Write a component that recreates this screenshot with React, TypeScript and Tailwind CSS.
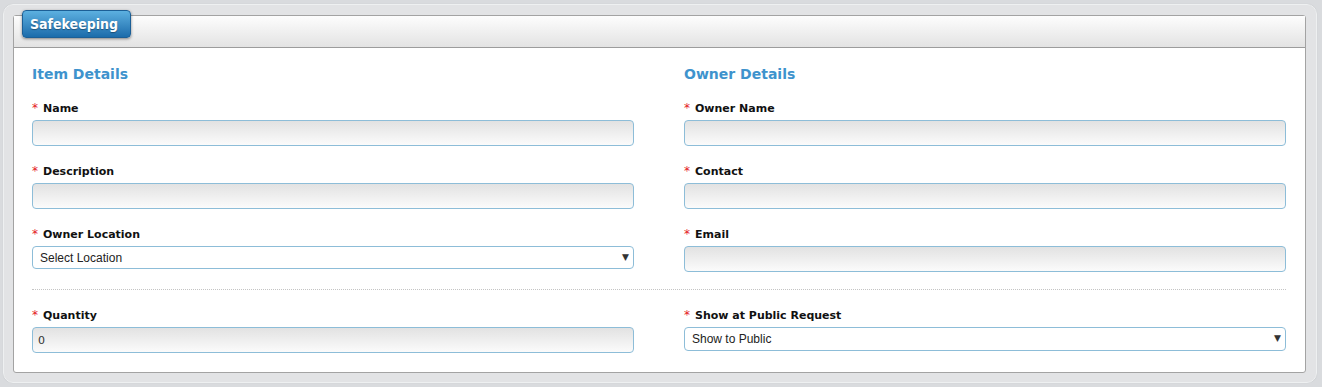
import { ReactNode } from 'react'

const labelFont = { fontFamily: '"DejaVu Sans", Verdana, sans-serif' }

function Label({ children }: { children: ReactNode }) {
  return (
    <label
      className="flex items-center h-[14px] pt-[2px] text-[11px] font-bold text-[#111] leading-none"
      style={labelFont}
    >
      <span className="text-[#e4201c] font-normal mr-[5px] text-[12px]">*</span>
      {children}
    </label>
  )
}

function TextField({ value = '' }: { value?: string }) {
  return (
    <input
      type="text"
      defaultValue={value}
      className="mt-[6px] block h-[26px] w-full rounded-[4px] border border-[#8dbdd8] bg-gradient-to-b from-[#e2e2e2] to-[#fbfbfb] px-[5px] text-[11px] text-[#333] outline-none font-['DejaVu_Sans',sans-serif]"
    />
  )
}

function SelectField({ value, height }: { value: string; height: string }) {
  return (
    <div className={`relative mt-[6px] w-full ${height}`}>
      <select
        defaultValue={value}
        className="block h-full w-full appearance-none rounded-[4px] border border-[#8dbdd8] bg-white pl-[7px] text-[12px] text-[#222] outline-none font-['Liberation_Sans',Arial,sans-serif]"
      >
        <option>{value}</option>
      </select>
      <span className="pointer-events-none absolute right-[5px] top-1/2 -translate-y-1/2 text-[9px] text-[#333] font-['DejaVu_Sans',sans-serif]">
        ▼
      </span>
    </div>
  )
}

function Field({ label, children }: { label: string; children: ReactNode }) {
  return (
    <div className="flex flex-col mb-[17px]">
      <Label>{label}</Label>
      {children}
    </div>
  )
}

export default function App() {
  return (
    <div className="h-[387px] w-full bg-[#d9dbde] pt-[4px] pl-[3px] pr-[5px]">
      <div className="h-[379px] rounded-[10px] border border-[#eef0f1] bg-[#e2e3e5] pt-[10px] pl-[9px] pr-[10px] shadow-[0_0_1px_rgba(0,0,0,0.15)]">
        <div className="relative h-[358px] rounded-[3px] border border-[#a3a3a3] bg-white">
          <div className="h-[32px] border-b border-[#9c9c9c] bg-gradient-to-b from-[#fdfdfd] to-[#e3e3e3]" />
          <div
            className="absolute left-[8px] top-[-6px] flex h-[28px] w-[109px] items-center rounded-[4px] border border-[#1c5f96] bg-gradient-to-b from-[#5cb0e0] to-[#1b6cab] pl-[7px] text-[14px] font-bold text-white shadow-[0_1px_3px_rgba(0,0,0,0.45)]"
            style={{ fontFamily: '"DejaVu Sans Condensed", "DejaVu Sans", sans-serif', textShadow: '0 1px 1px rgba(0,0,0,0.35)' }}
          >
            Safekeeping
          </div>

          <div className="pl-[18px] pr-[19px] pt-[17px]">
            <div className="grid grid-cols-2 gap-x-[50px]">
              <div className="flex flex-col">
                <h2
                  className="mb-[17px] h-[18px] text-[14px] font-bold leading-[18px] text-[#3e93cd]"
                  style={labelFont}
                >
                  Item Details
                </h2>
                <Field label="Name">
                  <TextField />
                </Field>
                <Field label="Description">
                  <TextField />
                </Field>
                <Field label="Owner Location">
                  <SelectField value="Select Location" height="h-[23px]" />
                </Field>
              </div>
              <div className="flex flex-col">
                <h2
                  className="mb-[17px] h-[18px] text-[14px] font-bold leading-[18px] text-[#3e93cd]"
                  style={labelFont}
                >
                  Owner Details
                </h2>
                <Field label="Owner Name">
                  <TextField />
                </Field>
                <Field label="Contact">
                  <TextField />
                </Field>
                <Field label="Email">
                  <TextField />
                </Field>
              </div>
            </div>

            <div className="mb-[17px] border-t border-dotted border-[#c4c4c4]" />

            <div className="grid grid-cols-2 gap-x-[50px]">
              <div className="flex flex-col">
                <Label>Quantity</Label>
                <TextField value="0" />
              </div>
              <div className="flex flex-col">
                <Label>Show at Public Request</Label>
                <SelectField value="Show to Public" height="h-[24px]" />
              </div>
            </div>
          </div>
        </div>
      </div>
    </div>
  )
}
